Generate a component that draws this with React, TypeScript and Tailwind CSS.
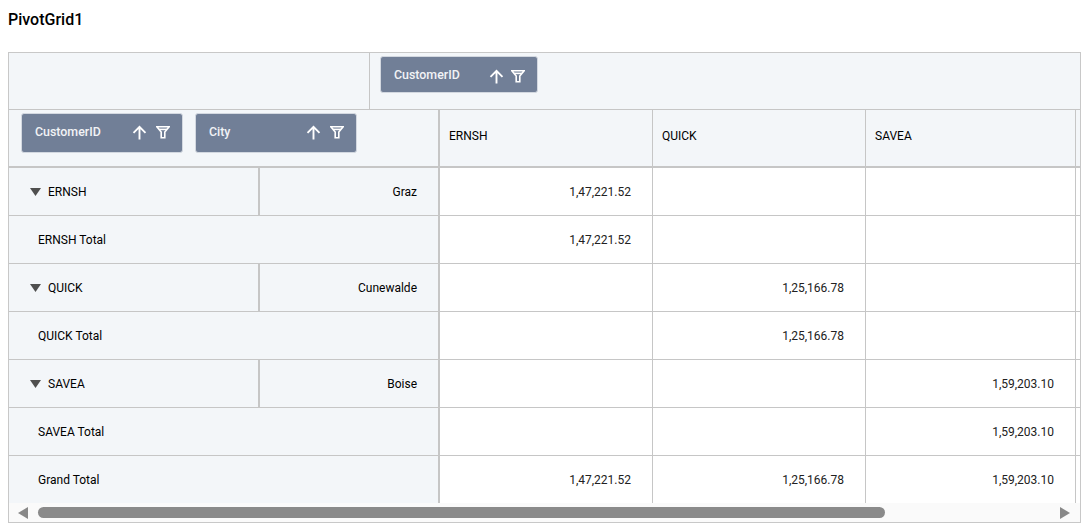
import React from "react";

const ArrowUp = () => (
  <svg width="15" height="15" viewBox="0 0 15 15" fill="none" stroke="#fff" strokeWidth="1.9" className="block">
    <path d="M7.5 14.5V1.8M1.5 7.8L7.5 1.8L13.5 7.8" />
  </svg>
);

const Funnel = () => (
  <svg width="14" height="13" viewBox="0 0 14 13" fill="none" stroke="#fff" className="block">
    <path d="M0.8 0.8H13.2L8.8 6V11.8H5.2V6Z" strokeWidth="1.6" />
    <path d="M3 3.4H11" strokeWidth="1.6" />
  </svg>
);

function Pill({ label, cls, textCls, iconCls }: { label: string; cls: string; textCls: string; iconCls: string }) {
  return (
    <div className={`${cls} shrink-0 flex items-center rounded-[3px] bg-[#717f97] border border-[#d3d8e0] pl-[13px] pr-[12px]`}>
      <span className={`flex-1 text-[12.4px] font-medium text-[#f1f3f6] ${textCls}`}>{label}</span>
      <div className={`flex items-center ${iconCls}`}>
        <ArrowUp />
        <Funnel />
      </div>
    </div>
  );
}

const Tri = () => (
  <svg width="11" height="8" viewBox="0 0 11 8" className="block shrink-0">
    <path d="M0 0H11L5.5 8Z" fill="#4f4f4f" />
  </svg>
);

const cols = ["w-[213px]", "w-[213px]", "w-[210px]"];

function Values({ vals }: { vals: string[] }) {
  return (
    <>
      {cols.map((w, i) => (
        <div key={i} className={`${w} shrink-0 border-r border-[#c6c6c6] bg-white flex items-center justify-end pr-[21px] text-[#212121]`}>
          {vals[i]}
        </div>
      ))}
    </>
  );
}

function GroupRow({ name, city, vals }: { name: string; city: string; vals: string[] }) {
  return (
    <div className="h-[48px] shrink-0 flex border-b border-[#c6c6c6]">
      <div className="w-[251px] shrink-0 bg-[#f3f6f9] border-r-2 border-[#c6c6c6] flex items-center pl-[21px] gap-[7px] text-black">
        <Tri />
        <span>{name}</span>
      </div>
      <div className="w-[180px] shrink-0 bg-[#f3f6f9] border-r-2 border-[#c6c6c6] flex items-center justify-end pr-[21px] text-black">
        {city}
      </div>
      <Values vals={vals} />
    </div>
  );
}

function TotalRow({ name, vals }: { name: string; vals: string[] }) {
  return (
    <div className="h-[48px] shrink-0 flex border-b border-[#c6c6c6]">
      <div className="w-[431px] shrink-0 bg-[#f3f6f9] border-r-2 border-[#c6c6c6] flex items-center pl-[29px] text-black">
        {name}
      </div>
      <Values vals={vals} />
    </div>
  );
}

export default function App() {
  return (
    <div className="w-[1083px] h-[530px] bg-white overflow-hidden text-[12px] font-['Roboto',sans-serif]">
      <div className="h-[52px] pl-2 pt-[10px] text-[16px] leading-[20px] font-medium text-black">PivotGrid1</div>
      <div className="ml-2 w-[1073px] h-[471px] border border-[#c8c8c8] flex flex-col overflow-hidden">
        <div className="h-[57px] shrink-0 flex bg-[#f3f6f9] border-b border-[#c6c6c6]">
          <div className="w-[361px] shrink-0 border-r border-[#c6c6c6]" />
          <div className="pl-[10px] pt-[3px]">
            <Pill label="CustomerID" cls="h-[37px] w-[158px]" textCls="mt-[1px]" iconCls="gap-[7px] mt-[3px]" />
          </div>
        </div>
        <div className="h-[58px] shrink-0 flex bg-[#f3f6f9] border-b-2 border-[#c6c6c6]">
          <div className="w-[431px] shrink-0 border-r-2 border-[#c6c6c6] pl-[12px] pt-[3px] flex gap-[12px] items-start">
            <Pill label="CustomerID" cls="h-[40px] w-[162px]" textCls="-mt-[2px]" iconCls="gap-[9px] -mt-[1px]" />
            <Pill label="City" cls="h-[40px] w-[162px]" textCls="-mt-[2px]" iconCls="gap-[9px] -mt-[1px]" />
          </div>
          {["ERNSH", "QUICK", "SAVEA"].map((c, i) => (
            <div key={c} className={`${cols[i]} shrink-0 border-r border-[#c6c6c6] flex items-center pl-[9px] pb-[4px] text-black`}>
              {c}
            </div>
          ))}
        </div>
        <div className="flex-1 min-h-0 overflow-hidden">
          <GroupRow name="ERNSH" city="Graz" vals={["1,47,221.52", "", ""]} />
          <TotalRow name="ERNSH Total" vals={["1,47,221.52", "", ""]} />
          <GroupRow name="QUICK" city="Cunewalde" vals={["", "1,25,166.78", ""]} />
          <TotalRow name="QUICK Total" vals={["", "1,25,166.78", ""]} />
          <GroupRow name="SAVEA" city="Boise" vals={["", "", "1,59,203.10"]} />
          <TotalRow name="SAVEA Total" vals={["", "", "1,59,203.10"]} />
          <TotalRow name="Grand Total" vals={["1,47,221.52", "1,25,166.78", "1,59,203.10"]} />
        </div>
        <div className="h-[19px] shrink-0 bg-[#fafafa] flex items-center pl-[9px] pr-[10px]">
          <svg width="10" height="12" viewBox="0 0 10 12" className="block shrink-0">
            <path d="M10 0V12L0 6Z" fill="#888" />
          </svg>
          <div className="ml-[10px] w-[847px] h-[11px] rounded-full bg-[#8a8a8a]" />
          <div className="flex-1" />
          <svg width="10" height="12" viewBox="0 0 10 12" className="block shrink-0">
            <path d="M0 0V12L10 6Z" fill="#888" />
          </svg>
        </div>
      </div>
    </div>
  );
}
